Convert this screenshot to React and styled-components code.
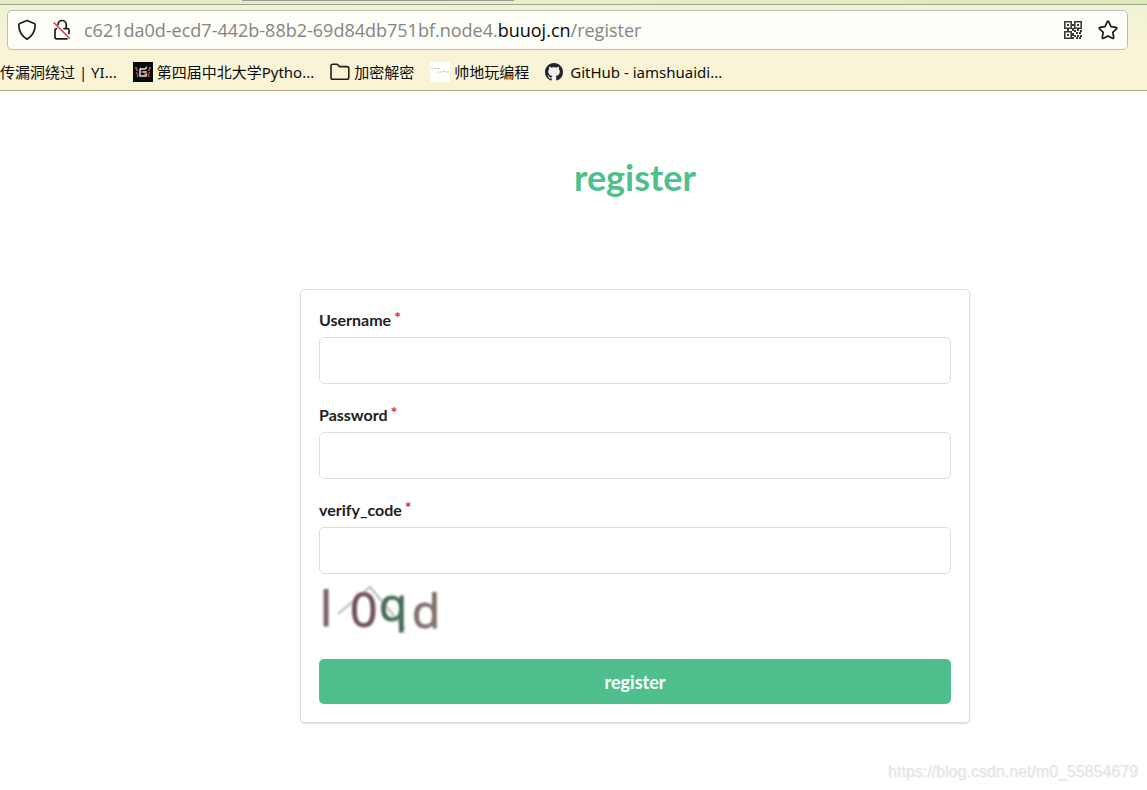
import React from "react";
import styled, { createGlobalStyle } from "styled-components";

const GlobalStyle = createGlobalStyle`
  *, *::before, *::after { box-sizing: border-box; }
  body {
    margin: 0;
    background: #fff;
    color: #212529;
    font-family: Lato, "Liberation Sans", sans-serif;
  }
`;

const Page = styled.div`
  display: flex;
  flex-direction: column;
  min-height: 100vh;
`;

const BrowserChrome = styled.header`
  border-bottom: 1px solid #aeaa80;
  background: linear-gradient(#eef3d2 0, #f7f4d7 40px, #faf4d7 60px);
  font-family: "Noto Sans", "Noto Sans CJK SC", sans-serif;
`;

const TabStrip = styled.div`
  height: 5px;
  padding-left: 242px;
  border-bottom: 1px solid #a0a294;
  background: linear-gradient(90deg, #e3ecc0, #e6efc8 50%, #dde9b6);
`;

const ActiveTabEdge = styled.div`
  width: 272px;
  height: 1px;
  background: #9a9a96;
`;

const AddressBar = styled.div`
  display: flex;
  align-items: center;
  height: 40px;
  margin: 5px 19px 0 7px;
  padding: 0 9px;
  border: 1px solid #bdbdb6;
  border-radius: 5px;
  background: #fefef9;
`;

const IconButton = styled.button`
  display: flex;
  margin: 0 ${(p) => p.$after || 0}px 0 0;
  padding: 0;
  border: 0;
  background: none;
  color: #1c1c1a;
`;

const Url = styled.div`
  flex: 1;
  min-width: 0;
  overflow: hidden;
  color: #858585;
  font-family: "Open Sans", sans-serif;
  font-size: 18px;
  line-height: 26px;
  white-space: nowrap;
`;

const Domain = styled.span`
  color: #0a0a0a;
`;

const Bookmarks = styled.nav`
  display: flex;
  align-items: center;
  gap: 16px;
  height: 40px;
  padding-top: 4px;
  overflow: hidden;
`;

const Bookmark = styled.a`
  display: flex;
  flex: none;
  align-items: center;
  gap: ${(p) => p.$gap || 4}px;
  color: #0c0c0c;
  font-size: 15px;
  line-height: 20px;
  text-decoration: none;
  white-space: nowrap;
`;

const Main = styled.main`
  width: 100%;
  padding: 64px 0 24px 123px;
`;

const Column = styled.div`
  max-width: 670px;
  margin: 0 auto;
`;

const Title = styled.h1`
  margin: 0 0 90px;
  color: #50bf8e;
  font-size: 36px;
  font-weight: 700;
  line-height: 44px;
  text-align: center;
`;

const Card = styled.form`
  padding: 18px;
  border: 1px solid #dcddde;
  border-radius: 5px;
  box-shadow: 0 1px 2px rgba(34, 36, 38, 0.15);
`;

const Field = styled.div`
  margin-bottom: ${(p) => (p.$last ? 0 : 19)}px;
`;

const Label = styled.label`
  display: block;
  margin-bottom: 5px;
  color: #212121;
  font-size: 16px;
  font-weight: 700;
  line-height: 24px;
`;

const Required = styled.span`
  margin-left: 3px;
  color: #db2828;
  line-height: 1;
  vertical-align: 3px;
`;

const TextInput = styled.input`
  display: block;
  width: 100%;
  height: 47px;
  padding: 0 16px;
  border: 1px solid #dcddde;
  border-radius: 5px;
  background: #fff;
  font: inherit;
  font-size: 16px;
`;

const Captcha = styled.svg`
  display: block;
  margin-bottom: 15px;
  overflow: visible;
  font-family: "Open Sans", sans-serif;
`;

const Submit = styled.button`
  display: block;
  width: 100%;
  height: 45px;
  border: 0;
  border-radius: 5px;
  background: #50bf8e;
  color: #fff;
  font-family: inherit;
  font-size: 18px;
  font-weight: 700;
`;

const Footer = styled.footer`
  margin-top: auto;
  padding: 0 9px 8px;
  color: #e4e4e4;
  font-family: "Liberation Sans", sans-serif;
  font-size: 16px;
  line-height: 20px;
  text-align: right;
  text-shadow: 1px 1px 0 #f5f5f5;
`;

const ShieldIcon = () => (
  <svg width="20" height="22" viewBox="0 0 20 22" fill="none" stroke="currentColor" strokeWidth="1.7" strokeLinejoin="round">
    <path d="M10 1.5 L17.2 4.5 Q18.3 5 18.2 6.3 Q18 15.5 10 20.2 Q2 15.5 1.8 6.3 Q1.7 5 2.8 4.5 Z" />
  </svg>
);

const InsecureIcon = () => (
  <svg width="20" height="22" viewBox="0 0 20 22" fill="none" strokeWidth="1.7" strokeLinecap="round">
    <path d="M6 5.6 C6.3 3 7.8 1.5 10 1.5 C12.7 1.5 14.2 3.3 14.2 5.8 V9.6 H15.5 Q17 9.6 17 11.2 V14.5 M12 9.6 H14.2 M4.5 9.6 Q3 9.8 3 11.4 V18 Q3 19.8 4.7 19.8 H15" stroke="#1c1c1a" />
    <path d="M2 3.8 L17.5 19.3" stroke="#f22d55" strokeWidth="1.6" />
  </svg>
);

const QrIcon = () => (
  <svg width="18" height="18" viewBox="0 0 18 18" fill="#3a3b38">
    <path fillRule="evenodd" d="M0 0H8V8H0Z M1.6 1.6V6.4H6.4V1.6Z M10 0H18V8H10Z M11.6 1.6V6.4H16.4V1.6Z M0 10H8V18H0Z M1.6 11.6V16.4H6.4V11.6Z" />
    <path d="M3 3h2v2h-2z M13 3h2v2h-2z M3 13h2v2h-2z M8 3h2v2h-2z M3 8h2v2h-2z M8 7h2v3h-2z M10 9h2v2h-2z M13 8h2v2h-2z M16 9h2v2h-2z M12 11h2v2h-2z M8 12h2v3h-2z M15 11h2v2h-2z M10 14h2v2h-2z M13 14h2v2h-2z M16 14h2v2h-2z M8 16h2v2h-2z M12 16h2v2h-2z M15 16h2v2h-2z" />
  </svg>
);

const StarIcon = () => (
  <svg width="20" height="20" viewBox="0 0 20 20" fill="none" stroke="currentColor" strokeWidth="1.7" strokeLinejoin="round">
    <path d="M9.2 1.9 Q10 .5 10.8 1.9 L13 6.7 L18 7.4 Q19.5 7.7 18.4 8.8 L14.8 12.3 L15.7 17.4 Q15.9 19 14.4 18.3 L10 15.9 L5.6 18.3 Q4.1 19 4.3 17.4 L5.2 12.3 L1.6 8.8 Q.5 7.7 2 7.4 L7 6.7 Z" />
  </svg>
);

const ContestIcon = () => (
  <svg width="20" height="20" viewBox="0 0 20 20" fill="none">
    <rect width="20" height="20" fill="#0b0a0b" />
    <path d="M7 6 L8 7 H12 L14 5 M7 7 V14 H13 V10 H10" stroke="#dedede" strokeWidth="1.5" />
    <path d="M2 6h2 M16 6h2 M3 8h2 M15 8h2" stroke="#c8c4c4" />
    <path d="M3 10 L5 13 L4 15 M17 10 L15 13 L16 15 M8 10 H10 M11 13 L14 10" stroke="#b75443" strokeWidth="1.3" />
  </svg>
);

const FolderIcon = () => (
  <svg width="20" height="18" viewBox="0 0 20 18" fill="none" stroke="#20201d" strokeWidth="1.6" strokeLinejoin="round">
    <path d="M1 14.5 V3 Q1 1.2 2.8 1.2 H6.5 Q7.5 1.2 8.1 2 L9.3 3.6 H17 Q18.8 3.6 18.8 5.4 V14.5 Q18.8 16.3 17 16.3 H2.8 Q1 16.3 1 14.5 Z" />
  </svg>
);

const NotesIcon = () => (
  <svg width="20" height="20" viewBox="0 0 20 20">
    <rect width="20" height="20" fill="#fff" />
    <path d="M1 6.5h2 M4 6.5h2 M7 6.5h3 M7 10h2 M10 10h2 M13 9.5h2 M16 10h3" stroke="#c9c29c" strokeWidth="1.2" />
  </svg>
);

const GithubIcon = () => (
  <svg width="18" height="18" viewBox="0 0 16 16">
    <circle cx="8" cy="8" r="7.6" fill="#f3f2ee" />
    <path fill="#22262b" d="M8 0C3.58 0 0 3.58 0 8c0 3.54 2.29 6.53 5.47 7.59.4.07.55-.17.55-.38 0-.19-.01-.82-.01-1.49-2.01.37-2.53-.49-2.69-.94-.09-.23-.48-.94-.82-1.13-.28-.15-.68-.52-.01-.53.63-.01 1.08.58 1.23.82.72 1.21 1.87.87 2.33.66.07-.52.28-.87.51-1.07-1.78-.2-3.64-.89-3.64-3.95 0-.87.31-1.59.82-2.15-.08-.2-.36-1.02.08-2.12 0 0 .67-.21 2.2.82.64-.18 1.32-.27 2-.27s1.36.09 2 .27c1.53-1.04 2.2-.82 2.2-.82.44 1.1.16 1.92.08 2.12.51.56.82 1.27.82 2.15 0 3.07-1.87 3.75-3.65 3.95.29.25.54.73.54 1.48 0 1.07-.01 1.93-.01 2.2 0 .21.15.46.55.38A8.01 8.01 0 0 0 16 8c0-4.42-3.58-8-8-8Z" />
  </svg>
);

const fields = [
  { id: "username", label: "Username", type: "text" },
  { id: "password", label: "Password", type: "password" },
  { id: "verify_code", label: "verify_code", type: "text" },
];

export default function App() {
  return (
    <Page>
      <GlobalStyle />
      <BrowserChrome>
        <TabStrip>
          <ActiveTabEdge />
        </TabStrip>
        <AddressBar>
          <IconButton type="button" $after={15} aria-label="Tracking protection">
            <ShieldIcon />
          </IconButton>
          <IconButton type="button" $after={12} aria-label="Connection not secure">
            <InsecureIcon />
          </IconButton>
          <Url>
            c621da0d-ecd7-442b-88b2-69d84db751bf.node4.<Domain>buuoj.cn</Domain>/register
          </Url>
          <IconButton type="button" $after={16} aria-label="QR code">
            <QrIcon />
          </IconButton>
          <IconButton type="button" aria-label="Bookmark this page">
            <StarIcon />
          </IconButton>
        </AddressBar>
        <Bookmarks>
          <Bookmark href="#upload">传漏洞绕过 | YI...</Bookmark>
          <Bookmark href="#contest"><ContestIcon />第四届中北大学Pytho...</Bookmark>
          <Bookmark href="#crypto"><FolderIcon />加密解密</Bookmark>
          <Bookmark href="#coding"><NotesIcon />帅地玩编程</Bookmark>
          <Bookmark href="#github" $gap={7}><GithubIcon />GitHub - iamshuaidi...</Bookmark>
        </Bookmarks>
      </BrowserChrome>
      <Main>
        <Column>
          <Title>register</Title>
          <Card onSubmit={(e) => e.preventDefault()}>
            {fields.map((f, i) => (
              <Field key={f.id} $last={i === fields.length - 1}>
                <Label htmlFor={f.id}>
                  {f.label}
                  <Required>*</Required>
                </Label>
                <TextInput id={f.id} name={f.id} type={f.type} />
              </Field>
            ))}
            <Captcha width="130" height="70" viewBox="0 0 130 70" role="img" aria-label="Verification code">
              <defs>
                <filter id="soft" x="-10%" y="-10%" width="120%" height="120%">
                  <feGaussianBlur stdDeviation="1.2" />
                </filter>
              </defs>
              <g filter="url(#soft)">
                <path d="M19 40 L51 13 L86 55" fill="none" stroke="#b3bab5" strokeWidth="2" />
                <text x="1" y="52" fontSize="48" fill="#7d6067" stroke="#7d6067">l</text>
                <text x="31" y="53" fontSize="48" fill="#72505a" stroke="#72505a">0</text>
                <text x="60" y="47" fontSize="46" fill="#496b59" stroke="#496b59">q</text>
                <text x="93" y="54" fontSize="46" fill="#85706f" stroke="#85706f">d</text>
              </g>
            </Captcha>
            <Submit type="submit">register</Submit>
          </Card>
        </Column>
      </Main>
      <Footer>https://blog.csdn.net/m0_55854679</Footer>
    </Page>
  );
}
